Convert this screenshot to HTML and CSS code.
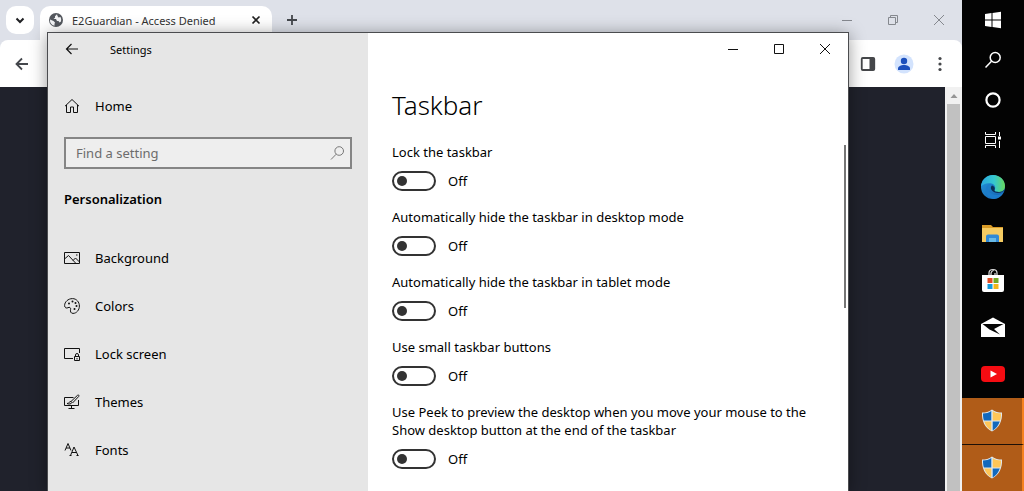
FILE: index.html
```html
<!DOCTYPE html>
<html lang="en">
<head>
<meta charset="utf-8">
<title>Taskbar settings</title>
<link rel="stylesheet" href="styles.css">
</head>
<body>
<div class="desktop">
  <div class="browser">
    <div class="tabstrip">
      <button class="tab-search" aria-label="Search tabs"><svg width="28" height="28" viewBox="0 0 28 28"><path d="M10.500 12.500l3.500 3.500 3.500-3.500" fill="none" stroke="#1f2023" stroke-width="2"/></svg></button>
      <div class="tab">
        <svg width="16" height="16" viewBox="0 0 16 16"><circle cx="8" cy="8" r="7" fill="#54585e"/><path d="M9 2.200L7 4.200v1.600L5.500 7H8l1 2h1.500l1 1.500 1.500-1A5.600 5.600 0 0 0 12.500 5L10.500 5.500 9.500 4z" fill="#f4f5f7"/><path d="M2 7.500L5.500 9 7 10.500 6.500 12v1.800A6 6 0 0 1 2 7.500z" fill="#f4f5f7"/></svg>
        <span class="tab-title">E2Guardian - Access Denied</span>
        <button class="tab-close" aria-label="Close tab"><svg width="16" height="16" viewBox="0 0 16 16"><path d="M4.500 4.500l7 7m0-7l-7 7" stroke="#222" stroke-width="1.700"/></svg></button>
      </div>
      <button class="new-tab" aria-label="New tab"><svg width="16" height="16" viewBox="0 0 16 16"><path d="M8 3v10M3 8h10" stroke="#44474c" stroke-width="1.800"/></svg></button>
      <div class="controls muted">
        <button aria-label="Minimize"><svg width="12" height="12" viewBox="0 0 12 12"><path d="M1 6.500h10"/></svg></button>
        <button aria-label="Restore"><svg width="12" height="12" viewBox="0 0 12 12"><path d="M1.500 3.500h7v7h-7zM3.500 3.500v-2h7v7h-2"/></svg></button>
        <button aria-label="Close"><svg width="12" height="12" viewBox="0 0 12 12"><path d="M1 1l10 10M11 1L1 11"/></svg></button>
      </div>
    </div>
    <div class="toolbar">
      <button aria-label="Back"><svg width="16" height="16" viewBox="0 0 16 16"><path d="M14 8H3M8 2.500L2.500 8 8 13.500" fill="none" stroke="#44474c" stroke-width="1.800"/></svg></button>
      <div class="toolbar-actions">
        <button aria-label="Side panel"><svg width="16" height="16" viewBox="0 0 16 16"><rect x="1.750" y="2" width="12.500" height="12" rx="1" fill="none" stroke="#45474a" stroke-width="1.800"/><path d="M9.500 2h5v12h-5z" fill="#45474a"/></svg></button>
        <button aria-label="Profile"><svg width="20" height="20" viewBox="0 0 20 20"><circle cx="10" cy="10" r="9.500" fill="#d3e3fd"/><circle cx="10" cy="7" r="3.200" fill="#1b4fbd"/><path d="M4 16v-1.500c0-2 3-3.500 6-3.500s6 1.500 6 3.500V16z" fill="#1b4fbd"/></svg></button>
        <button aria-label="Menu"><svg width="16" height="16" viewBox="0 0 16 16" fill="#45474a"><circle cx="8" cy="2.500" r="1.600"/><circle cx="8" cy="8" r="1.600"/><circle cx="8" cy="13.500" r="1.600"/></svg></button>
      </div>
    </div>
    <div class="page">
      <div class="scrollbar"><svg width="16" height="17" viewBox="0 0 16 17"><path d="M4.500 11L8 7l3.500 4z" fill="#969696"/></svg><div class="thumb"></div></div>
    </div>
  </div>

  <section class="settings" aria-label="Settings">
    <nav class="sidebar">
      <div class="titlebar">
        <button class="back" aria-label="Back"><svg width="16" height="16" viewBox="0 0 16 16"><path d="M14 8H2.500M7.500 3l-5 5 5 5" fill="none" stroke="#111" stroke-width="1.200"/></svg></button>
        <span>Settings</span>
      </div>
      <a class="item home" href="#"><svg width="16" height="16" viewBox="0 0 16 16"><path d="M2.500 7v7.500h4V9h3v5.500h4V7M1 8.200L8 1.500l7 6.700"/></svg>Home</a>
      <div class="search">
        <input type="text" aria-label="Find a setting" placeholder="Find a setting">
        <svg width="16" height="16" viewBox="0 0 16 16"><circle cx="10.200" cy="6" r="4.300"/><path d="M7.200 9.200L2 14.500"/></svg>
      </div>
      <h2>Personalization</h2>
      <a class="item" href="#"><svg width="16" height="16" viewBox="0 0 16 16"><path d="M.5 2.500h15v11H.5zM.5 9L4.500 5.500l7.500 8M9 10.500l2.500-2.500 4 4"/><path d="M12 5h1.500" /></svg>Background</a>
      <a class="item" href="#"><svg width="16" height="16" viewBox="0 0 16 16"><path d="M8.500.6C4 .6.600 4 .600 7.500c0 2.500 2 3 3.400 2.200 1.500-1 3 0 2.600 1.700-.5 2 .1 4 2.400 4 3.600 0 6.400-3.500 6.400-7.400S12.500.6 8.500.6z"/><g fill="#111" stroke="none"><circle cx="8.500" cy="3.500" r="1"/><circle cx="5" cy="5.500" r="1"/><circle cx="11.500" cy="5" r="1"/><circle cx="12.500" cy="8" r="1"/><circle cx="10.500" cy="11" r="1"/></g></svg>Colors</a>
      <a class="item" href="#"><svg width="16" height="16" viewBox="0 0 16 16"><path d="M8.500 12.500h-8v-10h15V7M5 12.500h4M10.500 10.500h5v4h-5zM11.500 10.500V9a1.500 1.500 0 0 1 3 0v1.500"/><path d="M13 12v1.500"/></svg>Lock screen</a>
      <a class="item" href="#"><svg width="16" height="16" viewBox="0 0 16 16"><path d="M9.500 3.500h-9v8h14V6M7.500 11.500v3M4.500 14.500h6M3 9.500c2 .3 2.500-2.500 4-2l.8 1C7.500 10 5 10.500 3 9.500zM7 7.500l6.500-6.200c1-.8 2 .2 1.200 1.200L8.500 9"/></svg>Themes</a>
      <a class="item" href="#"><svg width="16" height="16" viewBox="0 0 16 16"><path d="M1 8.500L4 1.500l3 7M2 6h4M6.500 13.500L10 5l4 8.500M8 10.500h4.500M5.500 13.500h2M12.500 13.500h2"/></svg>Fonts</a>
    </nav>
    <main class="content">
      <div class="controls">
        <button aria-label="Minimize"><svg width="12" height="12" viewBox="0 0 12 12"><path d="M1 6.500h10"/></svg></button>
        <button aria-label="Maximize"><svg width="12" height="12" viewBox="0 0 12 12"><path d="M1.500 1.500h9v9h-9z"/></svg></button>
        <button aria-label="Close"><svg width="12" height="12" viewBox="0 0 12 12"><path d="M1 1l10 10M11 1L1 11"/></svg></button>
      </div>
      <div class="options">
        <h1>Taskbar</h1>
        <div class="option"><label for="lock">Lock the taskbar</label><div class="switch"><input type="checkbox" id="lock"><span>Off</span></div></div>
        <div class="option"><label for="hide-desktop">Automatically hide the taskbar in desktop mode</label><div class="switch"><input type="checkbox" id="hide-desktop"><span>Off</span></div></div>
        <div class="option"><label for="hide-tablet">Automatically hide the taskbar in tablet mode</label><div class="switch"><input type="checkbox" id="hide-tablet"><span>Off</span></div></div>
        <div class="option"><label for="small">Use small taskbar buttons</label><div class="switch"><input type="checkbox" id="small"><span>Off</span></div></div>
        <div class="option"><label for="peek">Use Peek to preview the desktop when you move your mouse to the Show desktop button at the end of the taskbar</label><div class="switch"><input type="checkbox" id="peek"><span>Off</span></div></div>
      </div>
      <div class="scroll-hint"></div>
    </main>
  </section>

  <aside class="taskbar">
    <div class="system">
      <button aria-label="Start"><svg width="18" height="18" viewBox="0 0 18 18" fill="#fff"><path d="M1 3l6.500-1v6.500H1zM8.500 1.900L17 .8v7.700H8.500zM1 9.500h6.500V16L1 15zM8.500 9.500H17v7.700l-8.500-1.100z"/></svg></button>
      <button aria-label="Search"><svg width="18" height="18" viewBox="0 0 18 18" fill="none" stroke="#fff" stroke-width="1.500"><circle cx="11.200" cy="6.500" r="5"/><path d="M7.500 10.200L1.500 16.500"/></svg></button>
      <button aria-label="Cortana"><svg width="18" height="18" viewBox="0 0 18 18"><circle cx="9" cy="9" r="6.600" fill="none" stroke="#fff" stroke-width="2.200"/></svg></button>
      <button aria-label="Task view"><svg width="18" height="18" viewBox="0 0 18 18" fill="none" stroke="#fff"><path d="M1.500 5.500h10v7h-10zM1.500 1v2.500h10V1M1.500 17v-2.500h10V17M15.500 1v4M15.500 10v7"/><path d="M14 5.500h3v3h-3z" fill="#fff" stroke="none"/></svg></button>
    </div>
    <button class="app" aria-label="Edge"><svg width="26" height="26" viewBox="0 0 26 26"><defs><linearGradient id="edge-top" x1="0" x2="1"><stop offset="0" stop-color="#2aa8df"/><stop offset=".55" stop-color="#36c8cf"/><stop offset="1" stop-color="#68d85b"/></linearGradient><linearGradient id="edge-base" x1="0" x2="1" y2="1"><stop offset="0" stop-color="#2496dc"/><stop offset="1" stop-color="#1560ae"/></linearGradient></defs><circle cx="13" cy="13" r="12" fill="url(#edge-base)"/><path d="M1 12.500C1.500 5.500 7 1 13 1c7 0 12 5 12 11 0 4-3 6-6 6-3.500 0-5-1-4.500-2 2-3-.5-6-3-6.500C7 8.600 3 10 1 12.500z" fill="url(#edge-top)"/><path d="M11 9.700c-4 2-4.500 7 .5 10 4 2.500 8.500 1.500 12-1.500A12 12 0 0 1 14 25C8 24 5 19 6 14.500c.6-2.600 2.500-4.300 5-4.800z" fill="#1c7ccb"/><path d="M14.500 16c-.5 1 1 2 4.500 2 2 0 4-.7 5.200-2l-.4 1c-3 2-6.400 2.500-9.400 1.200-3.500-1.500-4.500-5-2.400-6.700 2 .5 3.500 2.500 2.500 4.500z" fill="#0a2f55"/></svg></button>
    <button class="app" aria-label="File Explorer"><svg width="24" height="24" viewBox="0 0 24 24"><path d="M1 3h9l2 2h10v15H1z" fill="#d99b27"/><path d="M1 6h21v14H1z" fill="#f5cb62"/><path d="M5 20v-5.500q0-2 2-2h9q2 0 2 2V20h-3v-4H8v4z" fill="#3089d5"/><path d="M8 16h7v4H8z" fill="#68b9e6"/></svg></button>
    <button class="app" aria-label="Microsoft Store"><svg width="24" height="26" viewBox="0 0 24 26"><path d="M8 8V5q0-3.500 4-3.500T16 5v3M10 8V5q0-1.500 3-3M14 8V5" fill="none" stroke="#ddd" stroke-width="1.200"/><path d="M1 7h22v15q0 2-2 2H3q-2 0-2-2z" fill="#fff"/><path d="M6.500 10h5v5h-5z" fill="#e24b23"/><path d="M12.500 10h5v5h-5z" fill="#73a925"/><path d="M6.500 16h5v5h-5z" fill="#159bdc"/><path d="M12.500 16h5v5h-5z" fill="#f4b61b"/></svg></button>
    <button class="app" aria-label="Mail"><svg width="26" height="22" viewBox="0 0 26 22"><path d="M1 7L13 .5 25 7v13H1z" fill="#fff"/><path d="M2.500 7h21L14 12l6 5.500-10.500-5z" fill="#050505"/></svg></button>
    <button class="app" aria-label="YouTube"><svg width="26" height="20" viewBox="0 0 26 20"><rect x="1" y="1" width="24" height="16" rx="4" fill="#f50c12"/><path d="M10.500 5.500v7l6.500-3.500z" fill="#fff"/></svg></button>
    <button class="app alert" aria-label="Administrator app 1"><svg width="24" height="24" viewBox="0 0 24 24"><use href="#shield"/></svg></button>
    <button class="app alert" aria-label="Administrator app 2"><svg width="24" height="24" viewBox="0 0 24 24"><defs><g id="shield"><path d="M12 .500C9 3 5.500 3.500 2 3.500c-.5 8.500 3 15.500 10 19 7-3.500 10.500-10.500 10-19-3.500 0-7-.5-10-3z" fill="#dfe9ef"/><path d="M11.300 2C8.500 3.800 6 4.500 3 4.500c0 2.600.2 5 .9 7h7.400z" fill="#1268bc"/><path d="M12.700 2C15.500 3.800 18 4.500 21 4.500c0 2.600-.2 5-.9 7h-7.400z" fill="#ffc657"/><path d="M11.300 12.500H4.200c1.400 4 3.600 7 7.100 9z" fill="#ffc657"/><path d="M12.700 12.500h7.100c-1.400 4-3.600 7-7.100 9z" fill="#1268bc"/></g></defs><use href="#shield"/></svg></button>
  </aside>
</div>
</body>
</html>
```
FILE: styles.css
```css
* {
  box-sizing: border-box;
}

body {
  margin: 0;
  font-family: "Noto Sans", "Open Sans", sans-serif;
  font-size: 13px;
  color: #000;
}

button {
  display: flex;
  align-items: center;
  justify-content: center;
  padding: 0;
  border: 0;
  background: none;
}

svg {
  display: block;
  flex-shrink: 0;
}

.desktop {
  position: relative;
  display: flex;
  height: 100vh;
  overflow: hidden;
}

/* Browser window */
.browser {
  flex: 1;
  display: flex;
  flex-direction: column;
  background: #dee1e9;
}

.tabstrip {
  display: flex;
  align-items: flex-start;
  height: 40px;
  padding-left: 6px;
}

.tab-search {
  width: 28px;
  height: 28px;
  margin: 6px 6px 0 0;
  border-radius: 10px;
  background: #fff;
}

.tab {
  display: flex;
  align-items: center;
  gap: 8px;
  width: 232px;
  height: 34px;
  margin-top: 6px;
  padding: 0 8px 6px;
  border-radius: 10px 10px 0 0;
  background: #fff;
}

.tab-title {
  flex: 1;
  font-size: 11px;
  color: #333;
  white-space: nowrap;
}

.new-tab {
  width: 40px;
  height: 40px;
}

.controls {
  display: flex;
  justify-content: flex-end;
}

.controls button {
  width: 46px;
  height: 32px;
}

.controls svg {
  fill: none;
  stroke: #111;
}

.muted {
  margin-left: auto;
}

.muted button {
  height: 40px;
}

.muted svg {
  stroke: #85888e;
}

.toolbar {
  display: flex;
  align-items: center;
  justify-content: space-between;
  height: 47px;
  padding: 0 4px;
  border-radius: 8px 8px 0 0;
  background: #fff;
}

.toolbar button {
  width: 36px;
  height: 36px;
}

.toolbar-actions {
  display: flex;
}

.page {
  flex: 1;
  display: flex;
  justify-content: flex-end;
  background: #20222c;
}

.scrollbar {
  display: flex;
  flex-direction: column;
  width: 17px;
  padding: 0 2px;
  background: #f1f1f1;
}

.scrollbar svg {
  align-self: center;
}

.thumb {
  flex: 1;
  background: #c1c1c1;
}

/* Settings window */
.settings {
  position: absolute;
  top: 32px;
  right: 175px;
  bottom: 0;
  left: 47px;
  display: flex;
  border: 1px solid #4b4c4f;
  border-bottom: 0;
  background: #fff;
  box-shadow: 0 2px 16px rgba(0, 0, 0, 0.4);
}

.sidebar {
  width: 320px;
  background: #e6e6e6;
}

.titlebar {
  display: flex;
  align-items: center;
  gap: 14px;
  height: 32px;
  font-size: 11px;
}

.back {
  width: 48px;
  height: 32px;
}

.item {
  display: flex;
  align-items: center;
  gap: 15px;
  height: 48px;
  padding: 0 16px;
  color: #000;
  text-decoration: none;
}

.item svg {
  fill: none;
  stroke: #111;
}

.home {
  margin-top: 17px;
}

.search {
  display: flex;
  align-items: center;
  height: 32px;
  margin: 7px 16px 6px;
  padding: 0 5px 0 10px;
  border: 2px solid #858585;
  background: #eee;
}

.search input {
  flex: 1;
  min-width: 0;
  padding: 0;
  border: 0;
  background: none;
  font: inherit;
}

.search input::placeholder {
  color: #6c6c6c;
}

.search svg {
  fill: none;
  stroke: #777;
}

h2 {
  margin: 0 16px 11px;
  font-size: 13px;
  font-weight: 600;
  line-height: 48px;
}

.content {
  position: relative;
  flex: 1;
}

.options {
  padding: 24px 24px 0;
}

h1 {
  margin: 0 0 22px;
  font-size: 26px;
  font-weight: 300;
  line-height: 32px;
}

.option {
  display: flex;
  flex-direction: column;
  gap: 10px;
  margin-bottom: 17px;
  line-height: 18px;
}

.switch {
  display: flex;
  align-items: center;
  gap: 12px;
  height: 20px;
}

.switch input {
  display: flex;
  align-items: center;
  width: 44px;
  height: 20px;
  margin: 0;
  padding-left: 3px;
  border: 2px solid #333;
  border-radius: 10px;
  appearance: none;
}

.switch input::before {
  content: "";
  width: 10px;
  height: 10px;
  border-radius: 50%;
  background: #333;
}

.switch span {
  line-height: 20px;
}

.scroll-hint {
  position: absolute;
  top: 112px;
  right: 2px;
  width: 2px;
  height: 163px;
  background: #767676;
}

/* Desktop taskbar */
.taskbar {
  display: flex;
  flex-direction: column;
  width: 62px;
  background: #030303;
}

.system {
  padding-bottom: 3px;
}

.system button {
  width: 100%;
  height: 40px;
}

.app {
  flex-shrink: 0;
  width: 100%;
  height: 47px;
}

.alert {
  border-right: 2px solid #f58220;
  border-bottom: 1px solid #1c1007;
  background: #b05c18;
}
```
